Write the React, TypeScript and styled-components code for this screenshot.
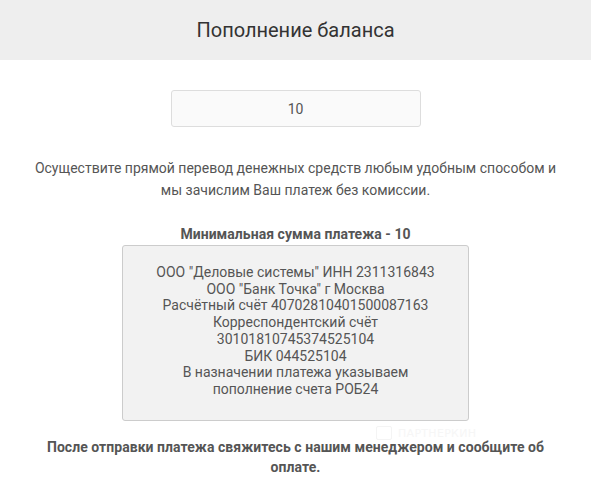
import React from 'react';
import styled, { createGlobalStyle } from 'styled-components';

const GlobalStyle = createGlobalStyle`
  body {
    margin: 0;
    background: #fff;
    font-family: Roboto, "Liberation Sans", sans-serif;
    color: #555;
  }
`;

const Page = styled.div`
  position: relative;
  width: 591px;
`;

const Header = styled.div`
  height: 60px;
  background: #eeeeee;
  display: flex;
  align-items: center;
  justify-content: center;
`;

const Title = styled.h2`
  margin: 0;
  font-size: 20px;
  font-weight: 400;
  color: #333;
`;

const Body = styled.div`
  display: flex;
  flex-direction: column;
  align-items: center;
  padding: 30px 20px 20px;
`;

const AmountInput = styled.input`
  box-sizing: border-box;
  width: 250px;
  height: 37px;
  border: 1px solid #ddd;
  border-radius: 3px;
  background: #fafafa;
  text-align: center;
  font-family: inherit;
  font-size: 14px;
  color: #555;
  outline: none;
`;

const Text = styled.p<{ $bold?: boolean; $lh: number; $mt: number }>`
  margin: ${(p) => p.$mt}px 0 0;
  text-align: center;
  font-size: 14px;
  line-height: ${(p) => p.$lh}px;
  font-weight: ${(p) => (p.$bold ? 700 : 400)};
  letter-spacing: ${(p) => (p.$bold ? '0.05px' : '0')};
  color: #555;
`;

const Details = styled.div`
  box-sizing: border-box;
  width: 347px;
  height: 176px;
  margin-top: 1px;
  padding: 18px 10px;
  background: #f2f2f2;
  border: 1px solid #ccc;
  border-radius: 3px;
  text-align: center;
  font-size: 14px;
  line-height: 16.7px;
  color: #555;
`;

const Watermark = styled.div`
  position: absolute;
  left: 376px;
  top: 426px;
  display: flex;
  align-items: center;
  gap: 6px;
  font-family: "DejaVu Sans", sans-serif;
  font-size: 11px;
  letter-spacing: 0.3px;
  color: #f6f6f6;
  pointer-events: none;
`;

const WatermarkIcon = styled.span`
  width: 14px;
  height: 12px;
  border: 1px solid #f4f4f4;
  border-radius: 2px;
`;

const details = [
  'ООО "Деловые системы" ИНН 2311316843',
  'ООО "Банк Точка" г Москва',
  'Расчётный счёт 40702810401500087163',
  'Корреспондентский счёт',
  '30101810745374525104',
  'БИК 044525104',
  'В назначении платежа указываем',
  'пополнение счета РОБ24',
];

export default function App() {
  return (
    <Page>
      <GlobalStyle />
      <Header>
        <Title>Пополнение баланса</Title>
      </Header>
      <Body>
        <AmountInput defaultValue="10" />
        <Text $lh={22} $mt={30}>
          Осуществите прямой перевод денежных средств любым удобным способом и
          <br />
          мы зачислим Ваш платеж без комиссии.
        </Text>
        <Text $bold $lh={20} $mt={23}>
          Минимальная сумма платежа - 10
        </Text>
        <Details>
          {details.map((line, i) => (
            <div key={i}>{line}</div>
          ))}
        </Details>
        <Text $bold $lh={20} $mt={16}>
          После отправки платежа свяжитесь с нашим менеджером и сообщите об
          <br />
          оплате.
        </Text>
      </Body>
      <Watermark>
        <WatermarkIcon />
        ПАРТНЕРКИН
      </Watermark>
    </Page>
  );
}
